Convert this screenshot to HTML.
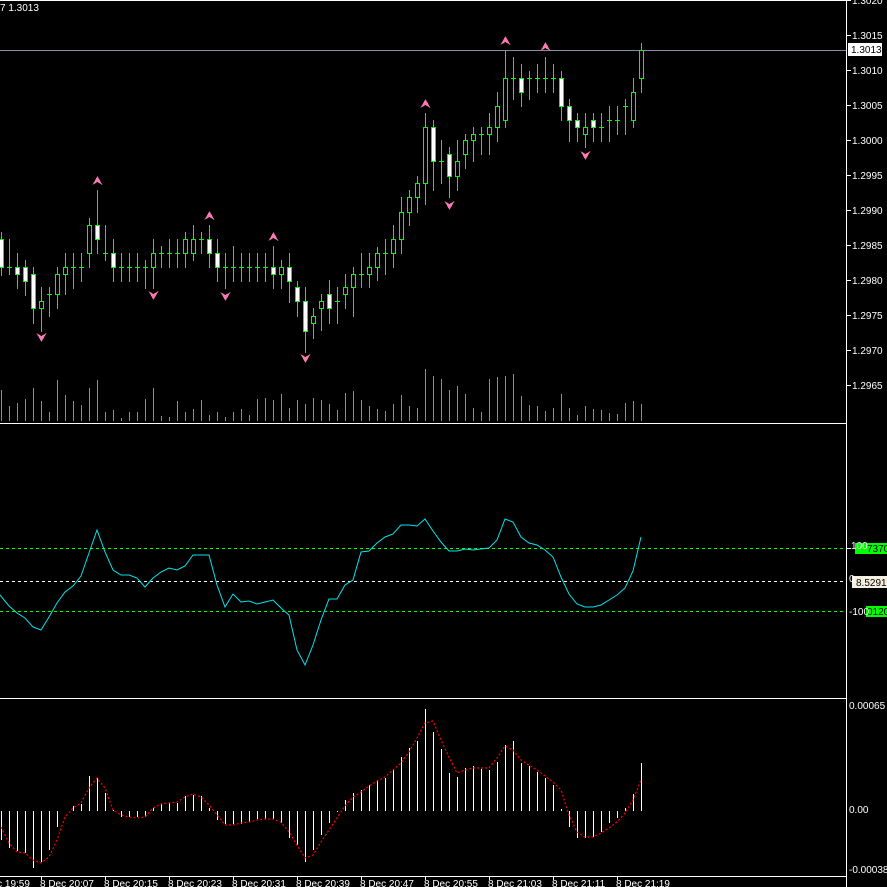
<!DOCTYPE html>
<html><head><meta charset="utf-8"><style>
html,body{margin:0;padding:0;background:#000;width:887px;height:887px;overflow:hidden}
svg{display:block}
text{font-family:"Liberation Sans",sans-serif;font-size:10px;fill:#fff}
</style></head><body>
<svg id="s" width="887" height="887" xmlns="http://www.w3.org/2000/svg" shape-rendering="crispEdges"></svg>
<script>
var C=[[232,239,267,275,0],[239,267,267,274,2],[253,267,274,288,0],[260,267,281,295,0],[267,274,308,323,0],[287,301,308,331,1],[287,294,294,316,2],[267,274,294,308,1],[253,267,274,294,1],[253,267,267,288,2],[253,267,267,281,2],[218,225,253,267,1],[190,225,239,253,0],[225,253,253,260,2],[239,253,267,281,0],[253,267,267,281,2],[253,267,267,281,2],[253,267,267,281,2],[260,267,267,288,2],[239,253,267,288,1],[246,253,253,267,2],[239,253,253,267,2],[239,253,253,267,2],[232,239,253,267,1],[225,239,253,260,1],[232,239,239,253,2],[225,239,253,267,0],[239,253,267,281,0],[253,267,267,288,2],[246,267,267,281,2],[253,267,267,281,2],[253,267,267,281,2],[253,267,267,281,2],[253,267,267,281,2],[246,267,274,288,0],[260,267,274,288,1],[253,267,281,302,0],[281,287,301,316,0],[287,301,331,352,0],[308,316,323,338,1],[294,301,308,330,1],[280,294,308,323,0],[287,301,301,323,2],[274,287,294,308,1],[267,274,287,316,1],[253,274,274,287,2],[253,267,274,287,1],[247,253,267,280,1],[239,253,253,274,2],[225,239,253,267,1],[197,212,239,253,1],[190,197,212,225,1],[176,183,197,212,1],[113,127,183,204,1],[120,127,161,190,0],[140,161,161,183,2],[147,154,176,197,0],[140,161,176,190,1],[134,140,154,168,1],[127,134,140,161,1],[127,134,134,154,2],[113,127,134,154,1],[92,106,127,141,1],[51,78,120,127,1],[57,78,78,99,2],[64,78,92,106,0],[71,78,78,99,2],[64,78,78,92,2],[57,78,78,92,2],[64,78,78,92,2],[71,78,106,120,0],[99,106,120,141,0],[113,120,127,141,0],[113,127,134,147,1],[113,120,127,141,0],[113,127,127,141,2],[106,120,120,141,2],[106,120,120,134,2],[99,106,106,134,2],[78,92,120,127,1],[43,50,78,92,1]];
var V=[390,406,403,399,388,401,412,380,395,401,405,388,380,412,410,418,412,412,399,388,416,417,401,412,409,400,415,412,417,412,409,415,399,398,400,394,408,400,404,398,400,404,410,393,391,400,406,409,411,404,395,406,408,369,376,379,390,386,394,408,412,379,377,376,374,396,405,406,411,408,394,408,415,406,409,410,413,414,403,401,404];
var CCI=[595,606,613,618,627,630,617,603,592,586,576,553,530,552,570,575,575,578,587,578,572,568,570,566,555,555,555,585,607,594,602,601,604,602,600,608,615,650,665,645,620,599,599,585,580,552,551,543,537,534,525,525,526,519,531,542,551,551,549,550,549,548,540,519,522,537,543,545,550,557,577,594,604,607,607,605,600,595,588,571,537];
var H=[840,848,851,853,868,862,850,827,811,806,804,776,778,793,810,817,817,817,817,808,804,803,803,796,795,796,808,820,824,824,824,822,819,819,819,823,838,845,862,850,835,823,812,800,793,790,785,780,778,770,757,748,741,709,732,749,773,777,768,766,769,770,762,745,741,763,766,772,778,785,809,827,838,838,837,832,823,818,808,794,763];
var S=[827,843,852,853,860,863,857,840,817,808,803,788,778,788,810,815,817,818,817,808,804,803,802,797,794,797,805,815,825,825,823,822,820,819,819,822,832,845,858,855,842,830,818,806,797,792,786,781,777,770,763,752,738,723,721,740,757,773,770,768,768,768,758,746,750,760,765,770,776,782,790,815,832,837,837,833,828,822,813,800,780];
var o='';
function L(x1,y1,x2,y2,c,extra){o+='<line x1="'+x1+'" y1="'+y1+'" x2="'+x2+'" y2="'+y2+'" stroke="'+c+'" stroke-width="1" '+(extra||'')+'/>';}
function T(x,y,t,a){o+='<text x="'+x+'" y="'+y+'" '+(a||'')+'>'+t+'</text>';}
L(0,0.5,846,0.5,'#fff');L(846.5,0,846.5,887,'#fff');
L(0,423.5,846,423.5,'#fff');L(0,698.5,846,698.5,'#fff');L(0,876.5,846,876.5,'#fff');
L(0,50.5,846,50.5,'#7f90a3');
for(var i=0;i<V.length;i++){var x=1+8*i+0.5;L(x,V[i],x,421,'#32cd32');}
for(var i=0;i<C.length;i++){var c=C[i],x=1+8*i,xc=x+0.5;L(xc,c[0],xc,c[3]+1,'#00ff00');
 if(c[4]==2){L(x-2,c[1]+0.5,x+3,c[1]+0.5,'#00ff00');}
 else{o+='<rect x="'+(x-1.5)+'" y="'+(c[1]+0.5)+'" width="4" height="'+Math.max(c[2]-c[1],2)+'" fill="'+(c[4]==0?'#fff':'#000')+'" stroke="#00ff00"/>';}}
function up(x,y){o+='<path d="M'+x+' '+(y-5)+'L'+(x+5)+' '+(y+4)+'L'+x+' '+(y+1)+'L'+(x-5)+' '+(y+4)+'Z" fill="#ff77b4"/>';}
function dn(x,y){o+='<path d="M'+x+' '+(y+5)+'L'+(x+5)+' '+(y-4)+'L'+x+' '+(y-1)+'L'+(x-5)+' '+(y-4)+'Z" fill="#ff77b4"/>';}
[[97,181],[209,216],[273,237],[425,104],[505,41],[545,47]].forEach(function(p){up(p[0]+0.5,p[1]);});
[[41,337],[153,295],[225,296],[305,358],[449,205],[585,155]].forEach(function(p){dn(p[0]+0.5,p[1]);});
var pl=['1.3020','1.3015','1.3010','1.3005','1.3000','1.2995','1.2990','1.2985','1.2980','1.2975','1.2970','1.2965'];
for(var i=0;i<pl.length;i++){var y=i*35;L(847,y+0.5,851,y+0.5,'#fff');T(852,y+4,pl[i]);}
o+='<rect x="848" y="43" width="34" height="13" fill="#fff"/>';T(851,53,'1.3013','style="fill:#000"');
T(0,11,'7 1.3013');
L(0,548.5,846,548.5,'#00ff00','stroke-dasharray="3,3"');L(0,581.5,846,581.5,'#fff','stroke-dasharray="3,3"');L(0,611.5,846,611.5,'#00ff00','stroke-dasharray="3,3"');
var pts=CCI.map(function(v,i){return (i==0?0:1+8*i)+','+v;}).join(' ');
o+='<polyline points="'+pts+'" fill="none" stroke="#00e5ee" stroke-width="1" shape-rendering="auto"/>';
o+='<rect x="855" y="543" width="32" height="11" fill="#00ff00"/>';T(867,552,'7370','style="fill:#000"');
L(847,548.5,851,548.5,'#fff');T(851,549,'100');
o+='<rect x="852" y="576" width="35" height="12" fill="#f5f0e1"/>';T(856,586,'8.5291','style="fill:#000"');
T(849,582,'0');
o+='<rect x="866" y="606" width="21" height="11" fill="#00ff00"/>';T(867,615,'0120','style="fill:#000"');
T(849,615,'-100');
for(var i=0;i<H.length;i++){var x=1+8*i+0.5;var a=Math.min(H[i],811),b=Math.max(H[i],811);L(x,a,x,b,'#fff');}
var sp=S.map(function(v,i){return (1+8*i)+','+v;}).join(' ');
o+='<polyline points="'+sp+'" fill="none" stroke="#f00" stroke-width="1.2" stroke-dasharray="2,2" shape-rendering="auto"/>';
T(849,709,'0.00065');T(849,813,'0.00');T(849,873,'-0.00038');
var tl=['8 Dec 19:59','8 Dec 20:07','8 Dec 20:15','8 Dec 20:23','8 Dec 20:31','8 Dec 20:39','8 Dec 20:47','8 Dec 20:55','8 Dec 21:03','8 Dec 21:11','8 Dec 21:19'];
for(var i=0;i<tl.length;i++){var x=-23+64*i;L(x+0.5,877,x+0.5,880,'#fff');T(x-1,887,tl[i]);}
document.getElementById('s').innerHTML=o;
</script>
</body></html>
